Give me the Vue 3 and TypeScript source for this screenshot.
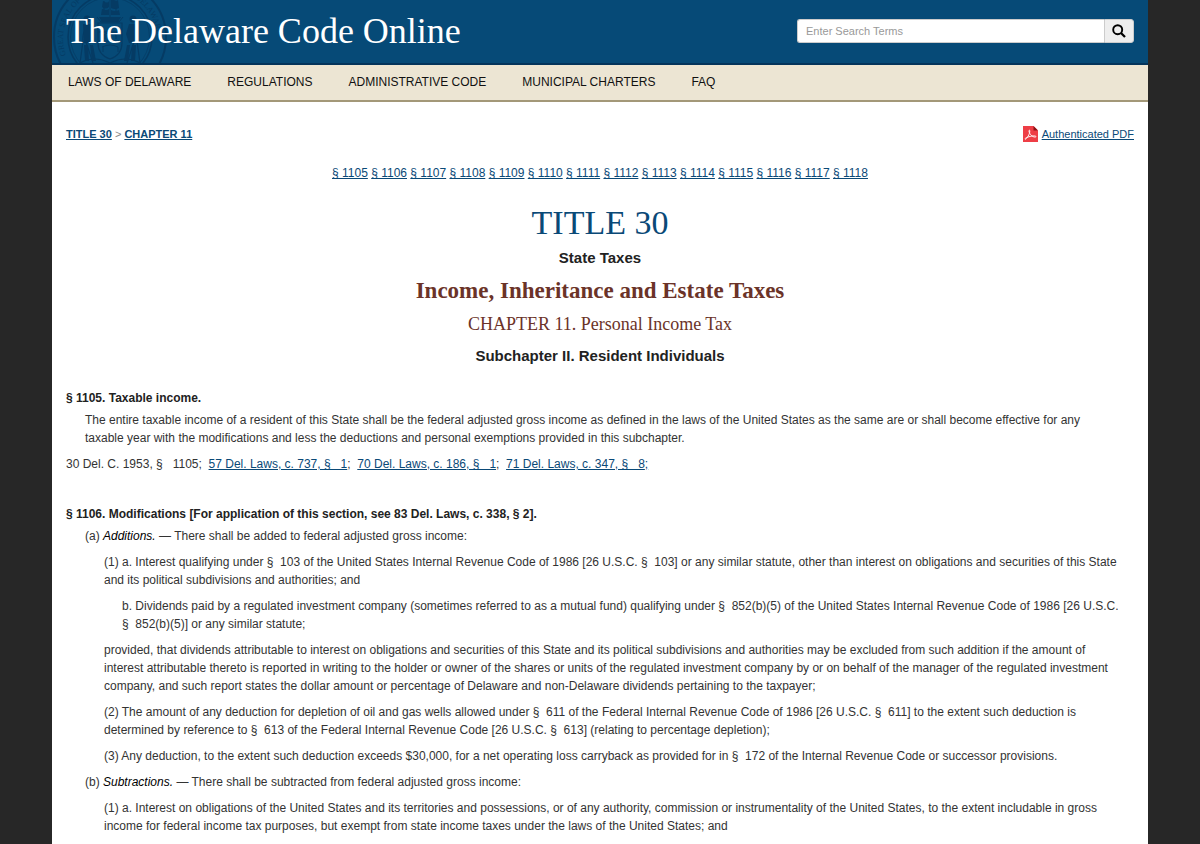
<script setup lang="ts">
interface Line { level: number; lead?: string; term?: string; text: string }
const menu: string[] = ['Laws of Delaware', 'Regulations', 'Administrative Code', 'Municipal Charters', 'FAQ']
const sections: number[] = Array.from({ length: 14 }, (_, i) => 1105 + i)
const laws: string[] = ['57 Del. Laws, c. 737, §\u00a0\u00a0 1', '70 Del. Laws, c. 186, §\u00a0\u00a0 1', '71 Del. Laws, c. 347, §\u00a0\u00a0 8']
const lines: Line[] = [
  { level: 1, lead: '(a) ', term: 'Additions.', text: ' — There shall be added to federal adjusted gross income:' },
  { level: 2, text: '(1) a. Interest qualifying under §\u00a0\u00a0103 of the United States Internal Revenue Code of 1986 [26 U.S.C. §\u00a0\u00a0103] or any similar statute, other than interest on obligations and securities of this State and its political subdivisions and authorities; and' },
  { level: 3, text: 'b. Dividends paid by a regulated investment company (sometimes referred to as a mutual fund) qualifying under §\u00a0\u00a0852(b)(5) of the United States Internal Revenue Code of 1986 [26 U.S.C. §\u00a0\u00a0852(b)(5)] or any similar statute;' },
  { level: 2, text: 'provided, that dividends attributable to interest on obligations and securities of this State and its political subdivisions and authorities may be excluded from such addition if the amount of interest\u00a0attributable thereto is reported in writing to the holder or owner of the shares or units of the regulated investment company by or on behalf of the manager of the regulated investment company,\u00a0and such report states the dollar amount or percentage of Delaware and non-Delaware dividends pertaining to the taxpayer;' },
  { level: 2, text: '(2) The amount of any deduction for depletion of oil and gas wells allowed under §\u00a0\u00a0611 of the Federal Internal Revenue Code of 1986 [26 U.S.C. §\u00a0\u00a0611] to the extent such deduction is determined by reference to §\u00a0\u00a0613 of the Federal Internal Revenue Code [26 U.S.C. §\u00a0\u00a0613] (relating to percentage depletion);' },
  { level: 2, text: '(3) Any deduction, to the extent such deduction exceeds $30,000, for a net operating loss carryback as provided for in §\u00a0\u00a0172 of the Internal Revenue Code or successor provisions.' },
  { level: 1, lead: '(b) ', term: 'Subtractions.', text: ' — There shall be subtracted from federal adjusted gross income:' },
  { level: 2, text: '(1) a. Interest on obligations of the United States and its territories and possessions, or of any authority, commission or instrumentality of the United States, to the extent includable in gross income for federal income tax purposes, but exempt from state income taxes under the laws of the United States; and' },
]
</script>

<template>
  <div class="page">
    <header class="banner">
      <svg class="seal" viewBox="0 0 116 116" aria-hidden="true">
        <defs><path id="seal-ring" d="M14 76 A47 47 0 1 1 102 76" /></defs>
        <g fill="none" stroke="#053b64">
          <circle cx="58" cy="58" r="56" stroke-width="2" />
          <circle cx="58" cy="58" r="42" stroke-width="1.5" /><circle cx="58" cy="58" r="39.5" stroke-width=".7" />
          <path stroke-width="1.2" d="M46 44h24v20q0 12-12 16q-12-4-12-16zM46 53h24M46 62h24M36 48q-6 4-5 14l-3 22M33 60l8 24M80 48q6 4 5 14l3 22M83 60l-8 24M28 84q14-8 30 0q16-8 30 0" />
          <path stroke-width="1" d="M58 17v22M52 22v14M64 22v14M45 38l4 5h18l4-5" />
          <path stroke-width="1" d="M52 56q6-5 12 0v4M53 56v4M50 68q8-4 16 0v5M51 68v5" />
        </g>
        <g fill="#053b64">
          <circle cx="35" cy="40" r="3.500" /><circle cx="81" cy="40" r="3.500" />
          <path d="M31 45h8l3 10-3 9h-7zM85 45h-8l-3 10 3 9h7zM32 66h4l1 16h-4zM38 66h3l3 16h-4zM84 66h-4l-1 16h4zM78 66h-3l-3 16h4z" />
          <path d="M51 22q5 3 6 0v6q-4 3-7 0zM59 19q5 4 7 2l1 8q-4 2-8 0zM50 30q5 2 7 0v6h-8zM59 31q4 2 8 0l1 5h-9zM47 38h22l-3 5H50z" />
        </g>
        <text class="seal-text"><textPath href="#seal-ring">GREAT SEAL OF THE STATE OF DELAWARE</textPath></text>
      </svg>
      <h1 class="site">The Delaware Code Online</h1>
      <form class="search" role="search" @submit.prevent>
        <input type="text" placeholder="Enter Search Terms" aria-label="Enter Search Terms" />
        <button type="submit" aria-label="Search">
          <svg viewBox="0 0 14 14" width="14" height="14" aria-hidden="true"><circle cx="5.700" cy="5.700" r="4.500" fill="none" stroke="#000" stroke-width="1.900" /><path d="M9 9l4 4" stroke="#000" stroke-width="2.300" /></svg>
        </button>
      </form>
    </header>
    <nav class="menu"><a v-for="m in menu" :key="m" href="#">{{ m }}</a></nav>
    <main class="content">
      <div class="crumbs">
        <div class="trail"><a href="#">TITLE 30</a> &gt; <a href="#">CHAPTER 11</a></div>
        <a class="pdf" href="#">
          <svg viewBox="0 0 15 16" width="15" height="16" aria-hidden="true">
            <path d="M0 0h10.500L15 4.500V16H0z" fill="#ee3e46" /><path d="M10.500 0L15 4.500h-4.500z" fill="#8b1116" />
            <path d="M2.300 13.300c1.500-.4 4.600-5.300 4.500-8.300 0-1.300-1-1-.8.200.4 3 3.600 6 6.300 5.900 1.500-.3.500-1.300-1.500-1.200-2.500.1-5 .7-7.500 1.800-1.200.6-1.600 1.400-1 1.600z" fill="none" stroke="#fff" stroke-width=".9" />
          </svg><span>Authenticated PDF</span>
        </a>
      </div>
      <nav class="jump" aria-label="Sections"><template v-for="n in sections" :key="n"><a href="#">§ {{ n }}</a>{{ ' ' }}</template></nav>
      <div class="heading">
        <h2>TITLE 30</h2>
        <h4>State Taxes</h4>
        <h3>Income, Inheritance and Estate Taxes</h3>
        <h3 class="chapter">CHAPTER 11. Personal Income Tax</h3>
        <h4>Subchapter II. Resident Individuals</h4>
      </div>
      <section>
        <h5>§ 1105. Taxable income.</h5>
        <p class="l1">The entire taxable income of a resident of this State shall be the federal adjusted gross income as defined in the laws of the United States as the same are or shall become effective for any taxable&nbsp;year with the modifications and less the deductions and personal exemptions provided in this subchapter.</p>
        <p class="history">30 Del. C. 1953, §&nbsp;&nbsp; 1105;&nbsp; <template v-for="(l, i) in laws" :key="l"><a href="#">{{ l }}<template v-if="i === 2">;</template></a><template v-if="i < 2">;&nbsp; </template></template></p>
      </section>
      <section>
        <h5>§ 1106. Modifications [For application of this section, see 83 Del. Laws, c. 338, § 2].</h5>
        <p v-for="(l, i) in lines" :key="i" :class="'l' + l.level">{{ l.lead }}<em v-if="l.term">{{ l.term }}</em>{{ l.text }}</p>
      </section>
    </main>
  </div>
</template>

<style>
html { background: #272727; overflow-y: hidden; }
body { margin: 0; }
</style>
<style scoped>
.page { margin: 0 52px; background: #fff; min-height: 100vh; color: #333; font-family: "Liberation Sans", Arial, sans-serif; font-size: 12px; line-height: 18px; }
a { color: #0a4977; }
.banner { position: relative; overflow: hidden; display: flex; justify-content: space-between; align-items: center; height: 61px; padding: 0 14px 2px; background: #064a77; border-bottom: 2px solid #04345b; }
.seal { position: absolute; left: 0; top: -21px; width: 116px; height: 116px; }
.seal-text { font: 8px "Liberation Serif", serif; fill: #053b64; }
.site { position: relative; margin: 0; color: #fff; font: 36px/44px "Liberation Serif", serif; }
.search { display: flex; width: 337px; height: 24px; }
.search input { flex: 1; min-width: 0; box-sizing: border-box; border: 1px solid #ccc; border-right: 0; border-radius: 3px 0 0 3px; padding: 0 8px; font: 11px "Liberation Sans", sans-serif; }
.search input::placeholder { color: #999; }
.search button { width: 30px; border: 1px solid #ccc; border-radius: 0 3px 3px 0; background: #eee; padding: 0; display: grid; place-items: center; }
.menu { display: flex; gap: 36px; padding: 0 16px; background: #ece5d3; border-bottom: 2px solid #a39878; font-size: 12px; line-height: 35px; }
.menu a { color: #111; text-decoration: none; text-transform: uppercase; }
.content { padding: 23px 14px 0; }
.crumbs { display: flex; justify-content: space-between; font-size: 11px; color: #888; }
.trail a { font-weight: bold; }
.pdf { display: flex; align-items: center; gap: 4px; text-decoration: none; }
.pdf span { text-decoration: underline; }
.jump { margin-top: 21px; text-align: center; }
.heading { text-align: center; }
.heading h2 { margin: 19px 0 0; font: 34px/44px "Liberation Serif", serif; color: #0a4977; }
.heading h3 { margin: 9px 0 0; font: bold 23px/30px "Liberation Serif", serif; color: #6b3328; }
.heading h3.chapter { margin-top: 3px; font-weight: normal; font-size: 18px; }
.heading h4 { margin: 4px 0 0; font-size: 15px; line-height: 18px; color: #222; }
.heading .chapter + h4 { margin-top: 8px; }
section { margin-bottom: 32px; }
h5 { margin: 24px 0 4px; font-size: 12px; line-height: 18px; color: #222; }
p { margin: 0 0 8px; }
em { color: #000; }
.l1 { padding-left: 19px; }
.l2 { padding-left: 38px; }
.l3 { padding-left: 56px; }
</style>
